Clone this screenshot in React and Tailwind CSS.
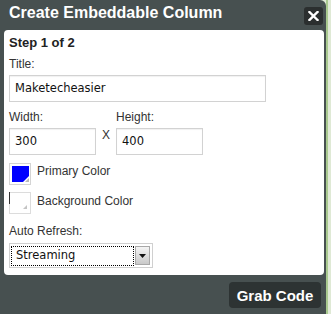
import React from "react";

// Embed-column dialog, step 1: title, size, colours, refresh mode.
const sans = { fontFamily: '"Liberation Sans", Arial, sans-serif' };
const field = { fontFamily: '"DejaVu Sans", Verdana, sans-serif' };

export default function App() {
  return (
    <div className="w-[331px] h-[314px] flex bg-[#dfe9d5] overflow-hidden" style={sans}>
      <div className="w-[326px] h-full bg-[#475050] rounded-tr-[6px] flex flex-col">
        <Header />
        <div className="mx-[4px] mr-[2px] h-[245px] bg-white rounded-[4px] pl-[5px] pt-[5px] text-[#333]">
          <div className="text-[13px] leading-[15px] font-bold text-[#222]">Step 1 of 2</div>

          <Label className="mt-[7px]">Title:</Label>
          <TextBox value="Maketecheasier" className="mt-[4px] w-[257px]" />

          <div className="flex mt-[8px]">
            <div>
              <Label>Width:</Label>
              <TextBox value="300" className="mt-[4px] w-[87px]" />
            </div>
            <div className="w-[20px] pl-[6px] pt-[18px] text-[12px] leading-[14px]">X</div>
            <div>
              <Label>Height:</Label>
              <TextBox value="400" className="mt-[4px] w-[87px]" />
            </div>
          </div>

          <div className="flex items-center gap-[6px] mt-[8px]">
            <PrimarySwatch />
            <span className="text-[12px] leading-[14px] -mt-[7px]">Primary Color</span>
          </div>
          <div className="flex items-center gap-[6px] mt-[7px]">
            <BackgroundSwatch />
            <span className="text-[12px] leading-[14px] -mt-[5px]">Background Color</span>
          </div>

          <Label className="mt-[10px]">Auto Refresh:</Label>
          <Select value="Streaming" />
        </div>

        <div className="flex justify-end pr-[5px] pt-[7px]">
          <button className="w-[92px] h-[26px] rounded-[4px] bg-[#2d3333] text-white text-[15px] font-bold leading-none">
            Grab Code
          </button>
        </div>
      </div>
      <div className="w-[2px] h-full bg-[#a9c98f]" />
    </div>
  );
}

function Header() {
  return (
    <div className="h-[30px] flex items-start justify-between pl-[9px] pr-[3px]">
      <div className="text-white text-[16px] font-bold leading-[18px] mt-[4px]">
        Create Embeddable Column
      </div>
      <button className="w-[19px] h-[18px] mt-[7px] rounded-[3px] bg-[#2b2f2f] flex items-center justify-center">
        <svg width="11" height="10" viewBox="0 0 11 10">
          <path d="M1.5 1 L9.5 9 M9.5 1 L1.5 9" stroke="white" strokeWidth="2.4" strokeLinecap="square" />
        </svg>
      </button>
    </div>
  );
}

function Label({ children, className = "" }) {
  return <div className={`text-[12px] leading-[14px] text-[#333] ${className}`}>{children}</div>;
}

function TextBox({ value, className = "" }) {
  return (
    <div
      className={`h-[27px] border border-[#d2d2d2] shadow-[inset_0_1px_1px_rgba(0,0,0,0.06)] pl-[5px] flex items-center text-[11.5px] text-[#111] ${className}`}
      style={field}
    >
      {value}
    </div>
  );
}

function PrimarySwatch() {
  return (
    <svg width="22" height="22" viewBox="0 0 22 22">
      <rect x="0.5" y="0.5" width="21" height="21" fill="white" stroke="#d4d4d4" />
      <polygon points="3,3 20,3 20,13 14,19 3,19" fill="#0000ff" />
      <polygon points="20,15 20,19 16,19" fill="#b8b8b8" />
    </svg>
  );
}

function BackgroundSwatch() {
  return (
    <svg width="22" height="22" viewBox="0 0 22 22">
      <rect x="0.5" y="0.5" width="21" height="21" fill="white" stroke="#dcdcdc" />
      <line x1="0.5" y1="0" x2="0.5" y2="12" stroke="#333" />
      <polygon points="18,13 18,17 14,17" fill="#c4c4c4" />
    </svg>
  );
}

function Select({ value }) {
  return (
    <div className="mt-[5px] w-[144px] h-[25px] border border-[#d0d0d0] flex items-center p-[1px]">
      <div
        className="flex-1 h-[20px] border border-dotted border-black flex items-center pl-[4px] text-[11.5px] text-[#111]"
        style={field}
      >
        {value}
      </div>
      <div className="w-[15px] h-[19px] ml-[1px] mr-[1px] border border-[#a8a8a8] bg-gradient-to-b from-[#f4f4f4] to-[#c9c9c9] flex items-center justify-center">
        <svg width="7" height="4" viewBox="0 0 7 4">
          <polygon points="0,0 7,0 3.5,4" fill="#111" />
        </svg>
      </div>
    </div>
  );
}
